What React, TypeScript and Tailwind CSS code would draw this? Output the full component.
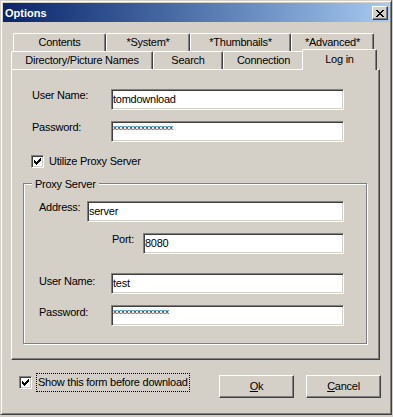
import React from "react";

const inputCls =
  "h-[21px] shrink-0 bg-white border border-t-[#808080] border-l-[#808080] border-r-white border-b-white shadow-[inset_1px_1px_0_#404040,inset_-1px_-1px_0_#d4d0c8] flex items-center pl-[1px] text-[11px] leading-[13px] text-black overflow-hidden whitespace-nowrap";

const labelCls = "shrink-0 text-[11px] leading-[13px] text-black whitespace-nowrap";

function CheckMark() {
  return (
    <svg width="7" height="7" viewBox="0 0 7 7" shapeRendering="crispEdges" fill="#000">
      <rect x="6" y="0" width="1" height="1" />
      <rect x="5" y="1" width="2" height="1" />
      <rect x="0" y="2" width="1" height="1" />
      <rect x="4" y="2" width="3" height="1" />
      <rect x="0" y="3" width="2" height="1" />
      <rect x="3" y="3" width="3" height="1" />
      <rect x="0" y="4" width="5" height="1" />
      <rect x="1" y="5" width="3" height="1" />
      <rect x="2" y="6" width="1" height="1" />
    </svg>
  );
}

function CloseGlyph() {
  return (
    <svg width="8" height="7" viewBox="0 0 8 7" shapeRendering="crispEdges" fill="#000">
      <rect x="0" y="0" width="2" height="1" />
      <rect x="6" y="0" width="2" height="1" />
      <rect x="1" y="1" width="2" height="1" />
      <rect x="5" y="1" width="2" height="1" />
      <rect x="2" y="2" width="4" height="1" />
      <rect x="3" y="3" width="2" height="1" />
      <rect x="2" y="4" width="4" height="1" />
      <rect x="1" y="5" width="2" height="1" />
      <rect x="5" y="5" width="2" height="1" />
      <rect x="0" y="6" width="2" height="1" />
      <rect x="6" y="6" width="2" height="1" />
    </svg>
  );
}

function Checkbox({ className = "" }: { className?: string }) {
  return (
    <div
      className={
        "w-[13px] h-[13px] shrink-0 bg-white border border-t-[#808080] border-l-[#808080] border-r-white border-b-white shadow-[inset_1px_1px_0_#404040,inset_-1px_-1px_0_#d4d0c8] flex items-center justify-center " +
        className
      }
    >
      <CheckMark />
    </div>
  );
}

const tabBase =
  "h-[18px] shrink-0 flex items-center justify-center bg-[#d4d0c8] border-l border-t border-r border-l-white border-t-white border-r-[#404040] shadow-[inset_-1px_0_0_#808080] rounded-t-[2px] text-[11px] leading-[13px] text-black whitespace-nowrap";

const btnCls =
  "h-[23px] w-[75px] shrink-0 flex items-center justify-center bg-[#d4d0c8] border border-t-white border-l-white border-r-[#404040] border-b-[#404040] shadow-[inset_-1px_-1px_0_#808080] text-[11px] leading-[13px] text-black";

export default function App() {
  return (
    <div className="w-[393px] h-[417px] bg-[#d4d0c8] font-['Liberation_Sans',Arial,sans-serif] tracking-[-0.25px] overflow-hidden">
      <div className="w-[392px] h-[415px] bg-[#d4d0c8] border border-t-[#d4d0c8] border-l-[#d4d0c8] border-r-[#404040] border-b-[#404040] shadow-[inset_1px_1px_0_#fff,inset_-1px_-1px_0_#808080] p-[2px] flex flex-col">
        {/* Title bar */}
        <div className="h-[19px] shrink-0 flex items-start bg-linear-to-r from-[#0a246a] to-[#a6caf0] pr-[1px]">
          <div className="pl-[2px] pt-[1px] text-white font-bold text-[11px] leading-[18px] tracking-normal">
            Options
          </div>
          <div className="ml-auto mt-[3px] w-[16px] h-[14px] flex items-center justify-center bg-[#d4d0c8] border border-t-white border-l-white border-r-[#404040] border-b-[#404040] shadow-[inset_-1px_-1px_0_#808080]">
            <CloseGlyph />
          </div>
        </div>

        {/* Tab row 1 */}
        <div className="flex mt-[11px] ml-[10px]">
          <div className={tabBase + " w-[93px]"}>Contents</div>
          <div className={tabBase + " w-[84px]"}>*System*</div>
          <div className={tabBase + " w-[101px]"}>*Thumbnails*</div>
          <div className={tabBase + " w-[83px]"}>*Advanced*</div>
        </div>

        {/* Tab row 2 */}
        <div className="flex items-start h-[18px] ml-[8px]">
          <div className={tabBase + " w-[142px]"}>Directory/Picture Names</div>
          <div className={tabBase + " w-[70px]"}>Search</div>
          <div className={tabBase + " w-[81px]"}>Connection</div>
          <div className="relative z-10 -ml-[2px] -mt-[2px] -mb-[1px] w-[75px] h-[21px] shrink-0 flex items-center justify-center bg-[#d4d0c8] border-l border-t border-r border-l-white border-t-white border-r-[#404040] shadow-[inset_-1px_0_0_#808080] rounded-t-[2px] text-[11px] leading-[13px] text-black pb-[1px]">
            Log in
          </div>
        </div>

        {/* Tab panel */}
        <div className="ml-[8px] w-[369px] h-[291px] shrink-0 border border-t-white border-l-white border-r-[#404040] border-b-[#404040] shadow-[inset_-1px_-1px_0_#808080] flex flex-col">
          <div className="flex mt-[19px]">
            <div className={labelCls + " w-[99px] pl-[20px]"}>User Name:</div>
            <div className={inputCls + " w-[233px]"}>tomdownload</div>
          </div>
          <div className="flex mt-[11px]">
            <div className={labelCls + " w-[99px] pl-[20px]"}>Password:</div>
            <div className={inputCls + " w-[233px]"}>
              <span className="text-[8px] leading-[8px] mb-[7px] tracking-normal">xxxxxxxxxxxxxxx</span>
            </div>
          </div>
          <div className="flex items-center mt-[13px] pl-[19px]">
            <Checkbox />
            <div className={labelCls + " ml-[5px]"}>Utilize Proxy Server</div>
          </div>

          {/* Group box */}
          <div className="relative mt-[15px] ml-[11px] w-[344px] h-[161px] shrink-0 border border-[#808080] shadow-[inset_1px_1px_0_#fff,1px_1px_0_#fff] flex flex-col">
            <div className="absolute -top-[6px] left-[8px] px-[3px] bg-[#d4d0c8] text-[11px] leading-[13px] text-black whitespace-nowrap">
              Proxy Server
            </div>
            <div className="flex mt-[17px]">
              <div className={labelCls + " w-[63px] pl-[15px]"}>Address:</div>
              <div className={inputCls + " w-[257px]"}>server</div>
            </div>
            <div className="flex mt-[11px]">
              <div className={labelCls + " w-[119px] pl-[88px]"}>Port:</div>
              <div className={inputCls + " w-[201px]"}>8080</div>
            </div>
            <div className="flex mt-[19px]">
              <div className={labelCls + " w-[87px] pl-[15px] mt-[2px]"}>User Name:</div>
              <div className={inputCls + " w-[233px]"}>test</div>
            </div>
            <div className="flex mt-[11px]">
              <div className={labelCls + " w-[87px] pl-[15px] mt-[1px]"}>Password:</div>
              <div className={inputCls + " w-[233px]"}>
                <span className="text-[8px] leading-[8px] mb-[7px] tracking-normal">xxxxxxxxxxxxxx</span>
              </div>
            </div>
          </div>
        </div>

        {/* Bottom row */}
        <div className="flex items-start mt-[13px]">
          <Checkbox className="ml-[16px] mt-[3px]" />
          <div className="ml-[4px] h-[19px] w-[154px] shrink-0 border border-dotted border-black flex items-center pl-[1px] text-[11px] leading-[13px] text-black whitespace-nowrap">
            Show this form before download
          </div>
          <div className={btnCls + " ml-[29px] mt-[2px]"}>
            <span>
              <span className="underline underline-offset-[1px]">O</span>k
            </span>
          </div>
          <div className={btnCls + " ml-[12px] mt-[2px]"}>
            <span>
              <span className="underline underline-offset-[1px]">C</span>ancel
            </span>
          </div>
        </div>
      </div>
    </div>
  );
}
